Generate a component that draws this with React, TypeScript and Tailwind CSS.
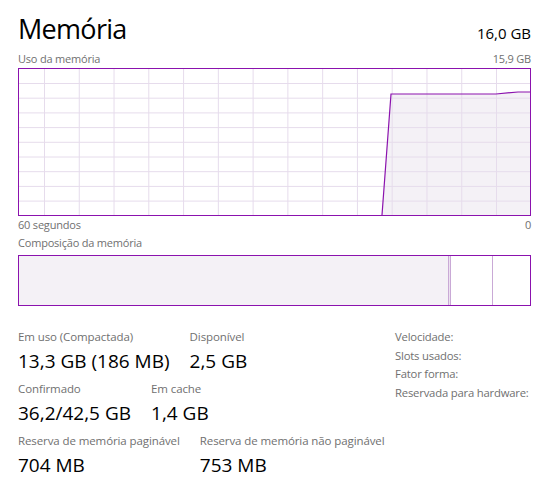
import React from 'react';

const PURPLE = '#8b12ae';

// vertical / horizontal grid positions inside the chart (relative to inner box)
const vLines = Array.from({ length: 14 }, (_, i) => 25.5 + i * 34.77);
const hLines = Array.from({ length: 9 }, (_, i) => 14.5 + i * 14.7);

const UsageChart: React.FC = () => {
  const line = 'M363,146 L372,25 L477,25 L499,23 L511,23';
  return (
    <div className="border border-[#8b12ae] w-full h-[148px] bg-white">
      <svg width="511" height="146" viewBox="0 0 511 146" className="block">
        <path d={`${line} L511,146 Z`} fill="#f4f1f6" />
        {vLines.map((x) => (
          <line key={`v${x}`} x1={x} x2={x} y1={0} y2={146} stroke="#e6dcec" strokeWidth={1} />
        ))}
        {hLines.map((y) => (
          <line key={`h${y}`} x1={0} x2={511} y1={y} y2={y} stroke="#e6dcec" strokeWidth={1} />
        ))}
        <path d={line} fill="none" stroke={PURPLE} strokeWidth={1.2} />
      </svg>
    </div>
  );
};

const Stat: React.FC<{ label: string; value: string }> = ({ label, value }) => (
  <div className="flex flex-col">
    <span className="text-[11.5px] leading-[18px] tracking-[-0.1px] text-[#707070] whitespace-nowrap">
      {label}
    </span>
    <span className="text-[19px] leading-[30px] text-black whitespace-nowrap">{value}</span>
  </div>
);

const App: React.FC = () => {
  return (
    <div
      className="w-[541px] h-[487px] bg-white pl-[18px] pr-[10px] pt-[11px]"
      style={{ fontFamily: '"Open Sans", "Noto Sans", sans-serif' }}
    >
      <div className="flex items-baseline justify-between">
        <h1 className="text-[27px] leading-[36px] tracking-[-0.7px] font-normal text-black">Memória</h1>
        <span className="text-[15px] text-black">16,0 GB</span>
      </div>

      <div className="mt-[4px] flex justify-between text-[11px] leading-[16px] tracking-[-0.2px] text-[#707070]">
        <span>Uso da memória</span>
        <span>15,9 GB</span>
      </div>
      <div className="mt-[1px]">
        <UsageChart />
      </div>
      <div className="mt-[1px] flex justify-between text-[11px] leading-[16px] tracking-[-0.2px] text-[#707070]">
        <span>60 segundos</span>
        <span>0</span>
      </div>

      <div className="mt-[2px] text-[11px] leading-[16px] tracking-[-0.2px] text-[#707070]">
        Composição da memória
      </div>
      <div className="mt-[4px] h-[51px] border border-[#8b12ae] flex">
        <div className="w-[429px] h-full bg-[#f4f1f6]" />
        <div className="w-[3px] h-full border-x border-[#c9a9d6] bg-[#ece2f0]" />
        <div className="w-[42px] h-full border-r border-[#c9a9d6]" />
        <div className="flex-1 h-full" />
      </div>

      <div className="mt-[22px] flex">
        <div className="flex-1 min-w-0 flex flex-col gap-[4px]">
          <div className="flex gap-5">
            <Stat label="Em uso (Compactada)" value="13,3 GB (186 MB)" />
            <Stat label="Disponível" value="2,5 GB" />
          </div>
          <div className="flex gap-5">
            <Stat label="Confirmado" value="36,2/42,5 GB" />
            <Stat label="Em cache" value="1,4 GB" />
          </div>
          <div className="flex gap-5">
            <Stat label="Reserva de memória paginável" value="704 MB" />
            <Stat label="Reserva de memória não paginável" value="753 MB" />
          </div>
        </div>
        <div className="w-[136px] shrink-0 flex flex-col text-[11.3px] leading-[18.5px] tracking-[-0.2px] text-[#707070]">
          <span>Velocidade:</span>
          <span>Slots usados:</span>
          <span>Fator forma:</span>
          <span className="whitespace-nowrap">Reservada para hardware:</span>
        </div>
      </div>
    </div>
  );
};

export default App;
